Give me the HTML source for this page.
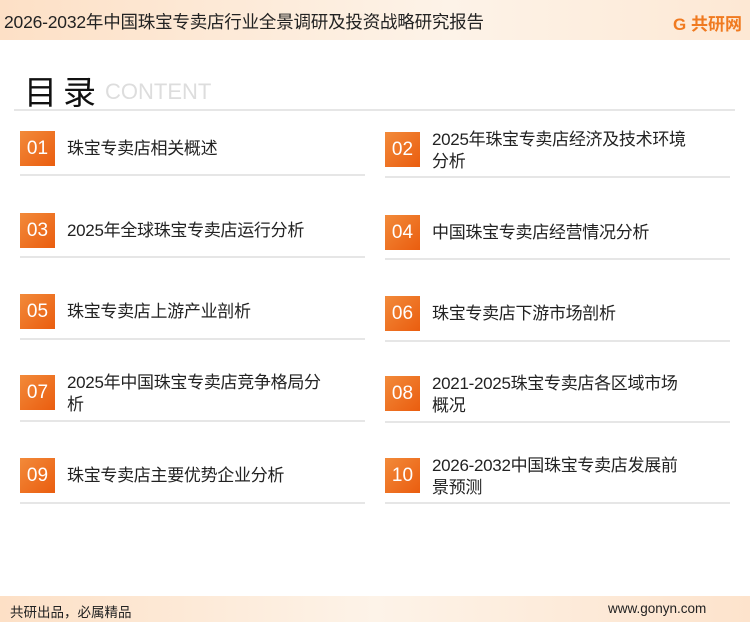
<!DOCTYPE html><html><head><meta charset="utf-8"><style>
*{margin:0;padding:0;box-sizing:border-box}
body{width:750px;height:622px;position:relative;background:#fff;font-family:"Liberation Sans","Noto Sans CJK SC",sans-serif;overflow:hidden}
.hd{position:absolute;left:0;top:0;width:750px;height:40px;background:linear-gradient(90deg,#fde0c6,#fdf3e8 60%,#fde8d4)}
.hd .t{position:absolute;left:4px;top:9px;font-size:17.5px;color:#222;letter-spacing:-0.2px}
.logo{position:absolute;right:8px;top:10px;font-size:17px;font-weight:bold;color:#f07a20}
.ft{position:absolute;left:0;top:596px;width:750px;height:26px;background:linear-gradient(90deg,#fde0c6,#fdf3e8 50%,#fde3cc)}
.ft span{position:absolute;top:5px;font-size:13.5px;color:#222}
.mu{position:absolute;left:24px;top:66px;font-size:33px;color:#111;letter-spacing:6px}
.ct{position:absolute;left:105px;top:79px;font-size:22px;color:#ddd}
.ln{position:absolute;height:2px;background:#e6e6e6}
.bx{position:absolute;width:35px;height:35px;background:linear-gradient(135deg,#f28a3a,#ea5d0f);color:#fff;font-size:19px;text-align:center;line-height:35px}
.tx{position:absolute;font-size:17px;color:#222;line-height:22px;width:320px;letter-spacing:-0.3px;white-space:nowrap}
</style></head><body>
<div class="hd"><div class="t">2026-2032年中国珠宝专卖店行业全景调研及投资战略研究报告</div><div class="logo">G 共研网</div></div>
<div class="mu">目录</div><div class="ct">CONTENT</div>
<div class="ln" style="left:14px;top:109px;width:721px"></div>

<div class="bx" style="left:20px;top:131px">01</div><div class="tx" style="left:67px;top:138px">珠宝专卖店相关概述</div>
<div class="ln" style="left:20px;top:174px;width:345px"></div>
<div class="bx" style="left:385px;top:132px">02</div><div class="tx" style="left:432px;top:129px">2025年珠宝专卖店经济及技术环境<br>分析</div>
<div class="ln" style="left:385px;top:176px;width:345px"></div>

<div class="bx" style="left:20px;top:213px">03</div><div class="tx" style="left:67px;top:220px">2025年全球珠宝专卖店运行分析</div>
<div class="ln" style="left:20px;top:256px;width:345px"></div>
<div class="bx" style="left:385px;top:215px">04</div><div class="tx" style="left:432px;top:222px">中国珠宝专卖店经营情况分析</div>
<div class="ln" style="left:385px;top:258px;width:345px"></div>

<div class="bx" style="left:20px;top:294px">05</div><div class="tx" style="left:67px;top:301px">珠宝专卖店上游产业剖析</div>
<div class="ln" style="left:20px;top:338px;width:345px"></div>
<div class="bx" style="left:385px;top:296px">06</div><div class="tx" style="left:432px;top:303px">珠宝专卖店下游市场剖析</div>
<div class="ln" style="left:385px;top:340px;width:345px"></div>

<div class="bx" style="left:20px;top:375px">07</div><div class="tx" style="left:67px;top:372px">2025年中国珠宝专卖店竞争格局分<br>析</div>
<div class="ln" style="left:20px;top:420px;width:345px"></div>
<div class="bx" style="left:385px;top:376px">08</div><div class="tx" style="left:432px;top:373px">2021-2025珠宝专卖店各区域市场<br>概况</div>
<div class="ln" style="left:385px;top:421px;width:345px"></div>

<div class="bx" style="left:20px;top:458px">09</div><div class="tx" style="left:67px;top:465px">珠宝专卖店主要优势企业分析</div>
<div class="ln" style="left:20px;top:502px;width:345px"></div>
<div class="bx" style="left:385px;top:458px">10</div><div class="tx" style="left:432px;top:455px">2026-2032中国珠宝专卖店发展前<br>景预测</div>
<div class="ln" style="left:385px;top:502px;width:345px"></div>

<div class="ft"><span style="left:10px">共研出品，必属精品</span><span style="left:608px">www.gonyn.com</span></div>
</body></html>
